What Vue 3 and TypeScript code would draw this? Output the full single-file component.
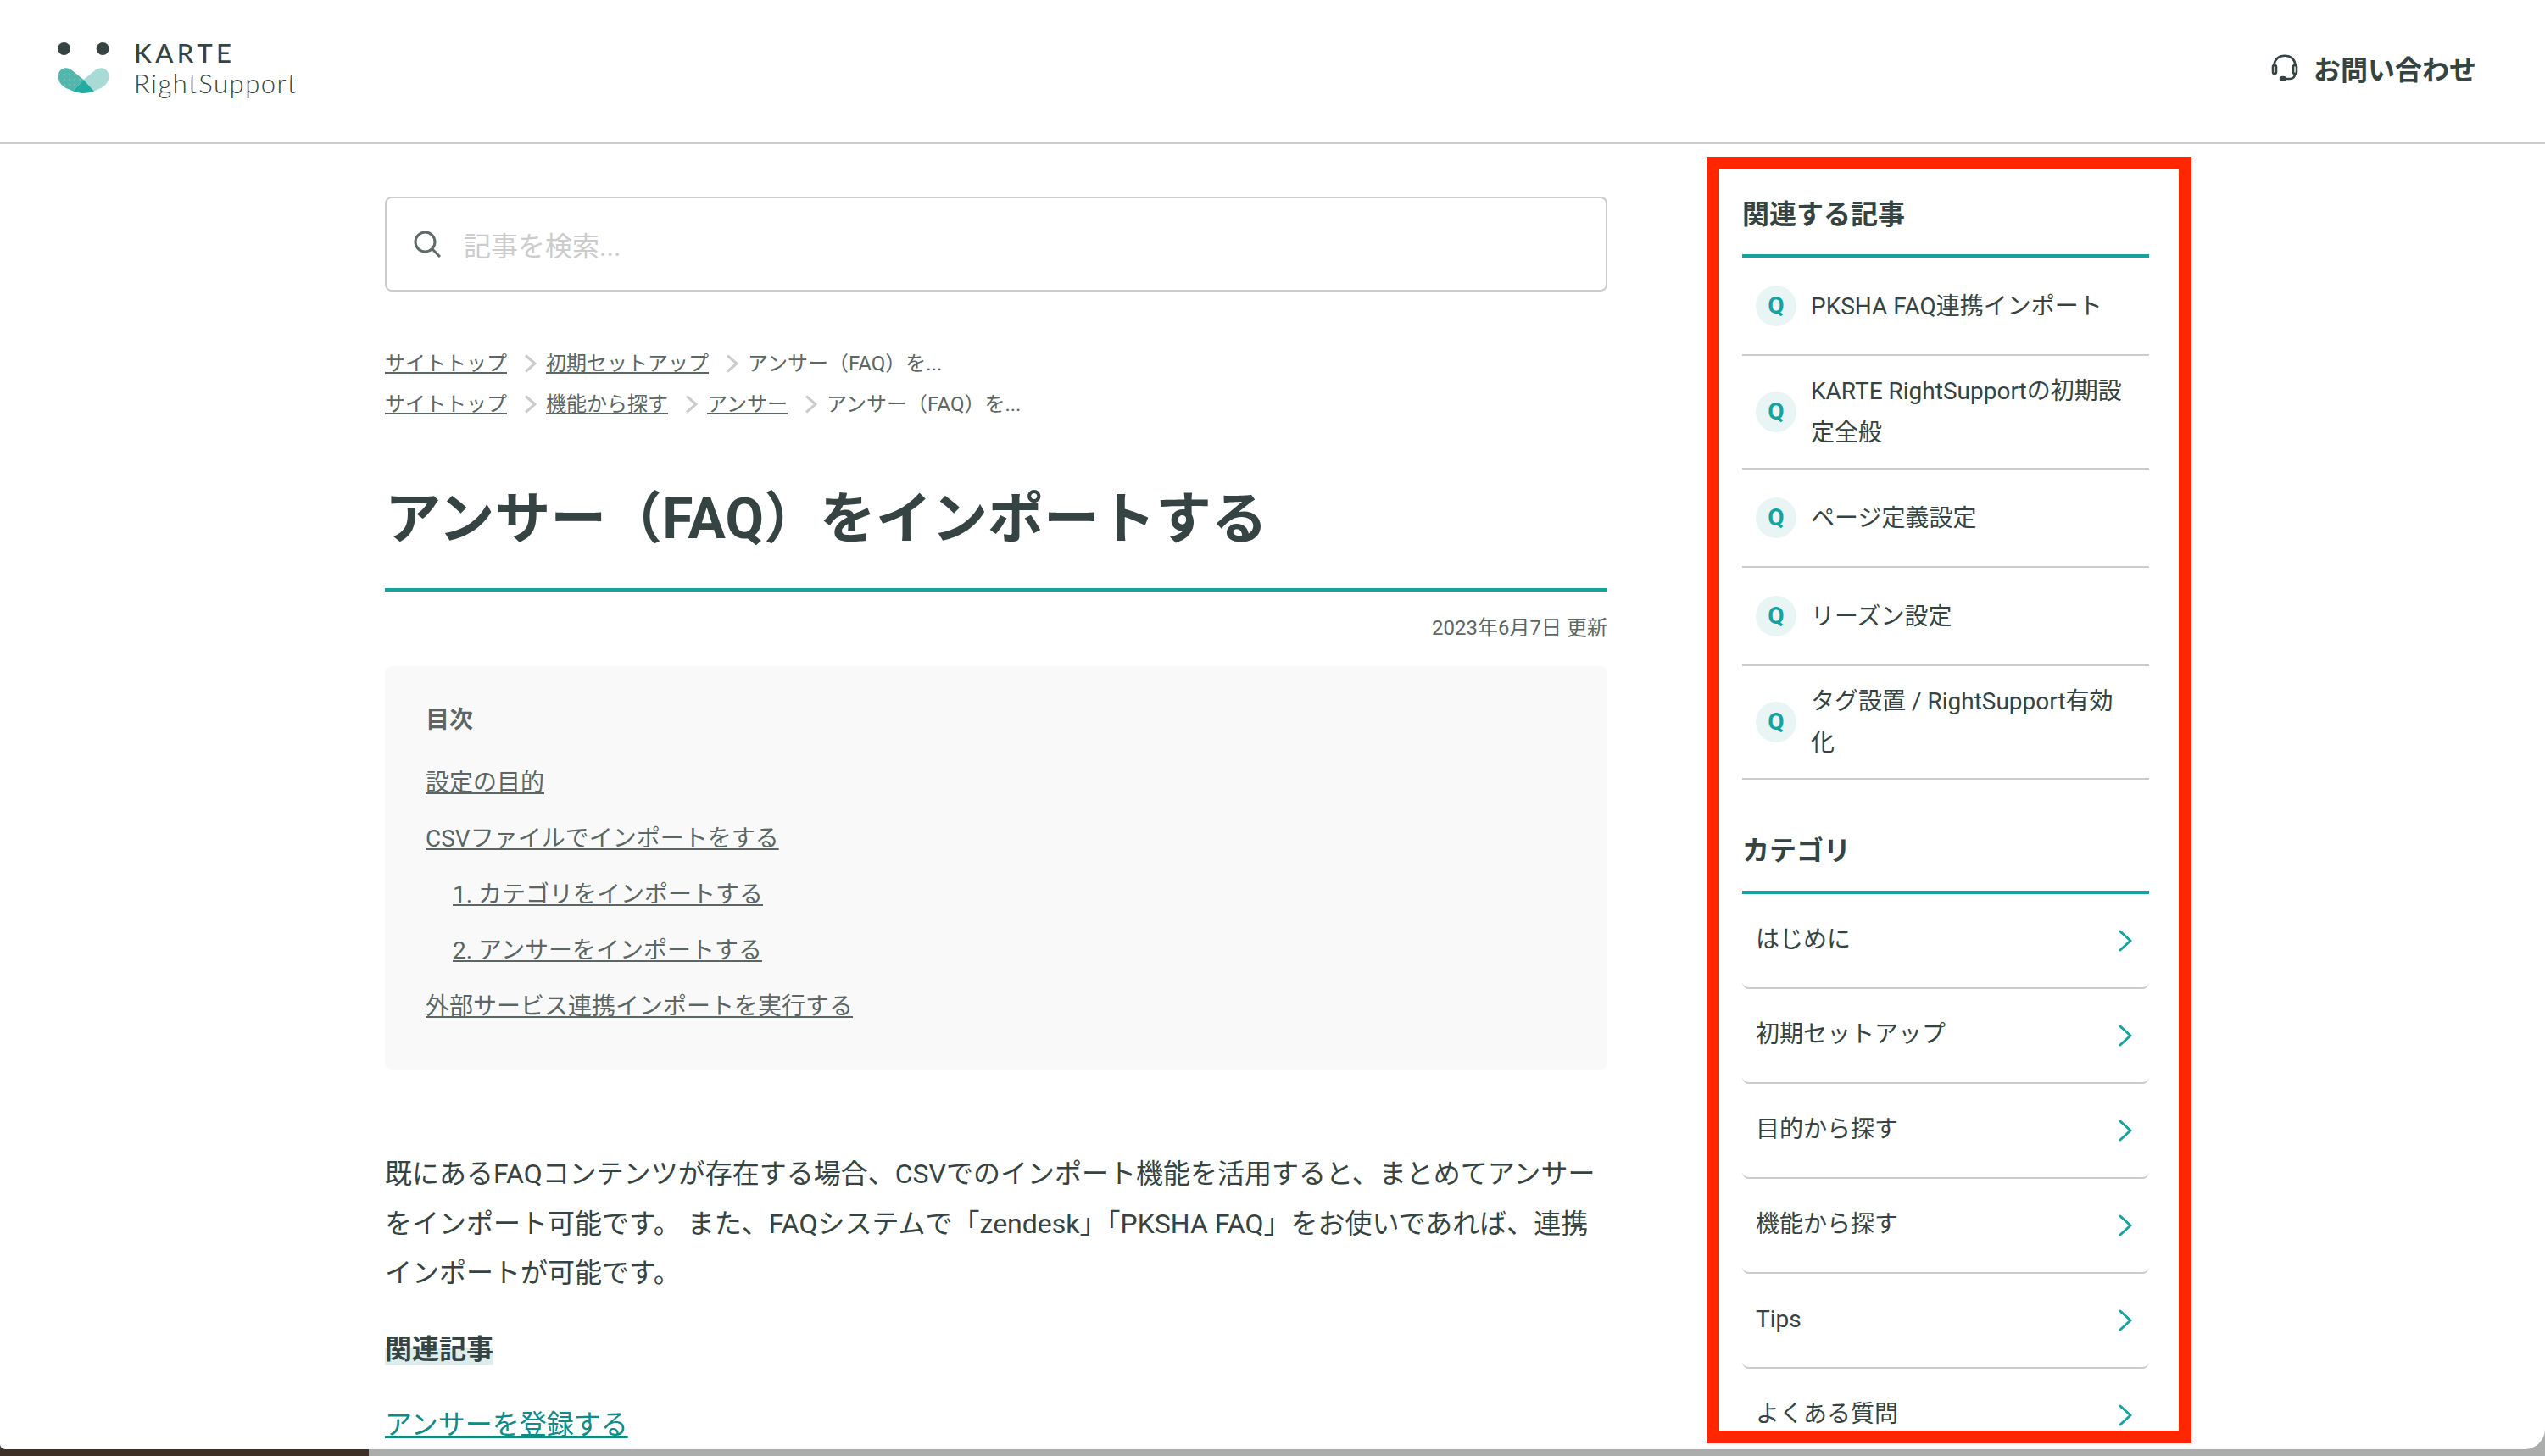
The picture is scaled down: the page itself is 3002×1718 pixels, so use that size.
<template>
  <div class="desktop">
    <div class="window">
      <header class="site-header">
        <a class="logo">
          <svg class="logo-mark" viewBox="0 0 61 60" width="61" height="60">
            <defs>
              <pattern id="dots" width="6" height="6" patternUnits="userSpaceOnUse">
                <circle cx="2" cy="2" r="0.8" fill="#fff" opacity="0.35" />
              </pattern>
            </defs>
            <circle cx="7.5" cy="7.5" r="7.5" fill="#354442" />
            <circle cx="53.2" cy="7.5" r="7.5" fill="#354442" />
            <path d="M30.5 44 17 33C11 28 3 30 1 37-1 44 3 50 10 54L18 57.5Z" fill="#52b6ac" />
            <path d="M30.5 44 17 33C11 28 3 30 1 37-1 44 3 50 10 54L18 57.5Z" fill="url(#dots)" />
            <path d="M30.5 44 44 33C50 28 58 30 60 37 62 44 58 50 51 54L43 57.5Z" fill="#a9dbd6" />
            <path d="M30.5 44 18 57.5C26 60.7 35 60.7 43 57.5Z" fill="#24aba0" />
          </svg>
          <span class="logo-text">
            <b>KARTE</b>
            <span>RightSupport</span>
          </span>
        </a>
        <a class="contact">
          <svg viewBox="0 0 32 32" width="32" height="32" fill="none" stroke="#354442" stroke-width="2.6" stroke-linecap="round">
            <path d="M3.5 13C4 6 9 1.8 16 1.8S28 6 28.500 13" />
            <rect x="2" y="13" width="4" height="10" rx="2" />
            <rect x="26" y="13" width="4" height="10" rx="2" />
            <path d="M28 23C28 27 26 29 22 29H15" />
            <ellipse cx="14" cy="29" rx="3" ry="2" fill="#354442" />
          </svg>
          <span>お問い合わせ</span>
        </a>
      </header>

      <div class="page">
        <main class="main">
          <div class="search">
            <svg viewBox="0 0 33 32" width="33" height="32" fill="none" stroke="#5f6968" stroke-width="3">
              <circle cx="13.500" cy="13.500" r="11.500" />
              <path d="M22 22 31 31" />
            </svg>
            <span>記事を検索...</span>
          </div>

          <nav class="crumbs">
            <div v-for="(trail, i) in trails" :key="i" class="trail">
              <template v-for="(c, j) in trail" :key="j">
                <a v-if="j < trail.length - 1">{{ c }}</a>
                <span v-else>{{ c }}</span>
                <svg v-if="j < trail.length - 1" viewBox="0 0 16 22" width="16" height="22" fill="none" stroke="#ccc" stroke-width="3">
                  <path d="M2 1.500 13 11 2 20.500" />
                </svg>
              </template>
            </div>
          </nav>

          <h1>アンサー（FAQ）をインポートする</h1>
          <p class="date">2023年6月7日 更新</p>

          <section class="toc">
            <h4>目次</h4>
            <a v-for="t in toc" :key="t.label" :class="{ sub: t.sub }">{{ t.label }}</a>
          </section>

          <p class="lead">
            既にあるFAQコンテンツが存在する場合、CSVでのインポート機能を活用すると、まとめてアンサーをインポート可能です。
            また、FAQシステムで「zendesk」「PKSHA FAQ」をお使いであれば、連携インポートが可能です。
          </p>
          <h3><span>関連記事</span></h3>
          <a class="link">アンサーを登録する</a>
        </main>

        <aside class="side">
          <div class="frame"></div>
          <h2>関連する記事</h2>
          <ul class="related">
            <li v-for="r in related" :key="r">
              <i>Q</i>
              <span>{{ r }}</span>
            </li>
          </ul>
          <h2 class="second">カテゴリ</h2>
          <ul class="cats">
            <li v-for="c in cats" :key="c">
              <span>{{ c }}</span>
              <svg viewBox="0 0 16 26" width="16" height="26" fill="none" stroke="#14a3a0" stroke-width="3" stroke-linecap="round" stroke-linejoin="round">
                <path d="M2 2 14 13 2 24" />
              </svg>
            </li>
          </ul>
        </aside>
      </div>
    </div>
  </div>
</template>

<script setup lang="ts">
const trails: string[][] = [
  ['サイトトップ', '初期セットアップ', 'アンサー（FAQ）を...'],
  ['サイトトップ', '機能から探す', 'アンサー', 'アンサー（FAQ）を...'],
]

const toc = [
  { label: '設定の目的', sub: false },
  { label: 'CSVファイルでインポートをする', sub: false },
  { label: '1. カテゴリをインポートする', sub: true },
  { label: '2. アンサーをインポートする', sub: true },
  { label: '外部サービス連携インポートを実行する', sub: false },
]

const related = [
  'PKSHA FAQ連携インポート',
  'KARTE RightSupportの初期設定全般',
  'ページ定義設定',
  'リーズン設定',
  'タグ設置 / RightSupport有効化',
]

const cats = ['はじめに', '初期セットアップ', '目的から探す', '機能から探す', 'Tips', 'よくある質問']
</script>

<style>
html,
body {
  margin: 0;
  background: #aaadac;
}
</style>

<style scoped>
.desktop {
  position: relative;
  height: 1718px;
  overflow: hidden;
  background: linear-gradient(90deg, #3c3027 435px, #aaadac 435px);
  font-family: Roboto, 'Noto Sans CJK JP', sans-serif;
  color: #354442;
}

.window {
  height: 1710px;
  overflow: hidden;
  border-radius: 0 0 24px 6px;
  background: #fff;
}

.site-header {
  display: flex;
  align-items: center;
  justify-content: space-between;
  box-sizing: border-box;
  height: 170px;
  padding: 0 81px 8px 68px;
  border-bottom: 2px solid #ccc;
}

.logo {
  display: flex;
  align-items: center;
  gap: 29px;
}

.logo-text {
  display: flex;
  flex-direction: column;
  font-family: Lato, sans-serif;
  line-height: 36px;
}

.logo-text b {
  font-size: 31px;
  font-weight: 500;
  letter-spacing: 4.500px;
}

.logo-text span {
  font-size: 31px;
  font-weight: 300;
  letter-spacing: 1.500px;
}

.contact {
  display: flex;
  align-items: center;
  gap: 18px;
  font-size: 32px;
  font-weight: 700;
}

.page {
  display: flex;
  gap: 159px;
  padding-left: 454px;
}

.main {
  width: 1442px;
  padding-top: 62px;
}

.search {
  display: flex;
  align-items: center;
  gap: 26px;
  box-sizing: border-box;
  height: 112px;
  padding-left: 32px;
  border: 2px solid #ccc;
  border-radius: 8px;
  font-size: 32px;
  color: #ccc;
}

.crumbs {
  margin-top: 61px;
  font-size: 24px;
  line-height: 48px;
  color: #5b6665;
}

.trail {
  display: flex;
  align-items: center;
  gap: 10px;
}

.trail svg {
  margin: 0 0 0 10px;
}

.trail a,
.toc a {
  text-decoration: underline;
}

h1 {
  margin: 62px 0 0;
  padding-bottom: 31px;
  border-bottom: 4px solid #14a3a0;
  font-size: 66px;
  font-weight: 700;
  line-height: 100px;
}

.date {
  margin: 23px 0 0;
  font-size: 24px;
  line-height: 40px;
  text-align: right;
  color: #5b6665;
}

.toc {
  display: flex;
  flex-direction: column;
  gap: 16px;
  margin-top: 25px;
  padding: 39px 48px 49px;
  border-radius: 8px;
  background: #f9f9f9;
  color: #5b6665;
  font-size: 28px;
  line-height: 50px;
}

.toc h4 {
  margin: 0 0 8px;
  font-size: 28px;
  font-weight: 700;
}

.toc .sub {
  padding-left: 32px;
}

.lead {
  margin: 94px 0 0;
  font-size: 32px;
  line-height: 58.500px;
}

h3 {
  margin: 32px 0 0;
  font-size: 32px;
  font-weight: 700;
  line-height: 56px;
}

h3 span {
  background: linear-gradient(transparent 45%, #deecec 45%);
}

.link {
  display: block;
  margin-top: 33px;
  font-size: 32px;
  line-height: 56px;
  color: #0f8b87;
  text-decoration: underline;
}

.side {
  position: relative;
  width: 480px;
  padding-top: 59px;
}

/* annotation drawn over the sidebar */
.frame {
  position: absolute;
  top: 15px;
  left: -42px;
  width: 572px;
  height: 1518px;
  box-sizing: border-box;
  border: solid #ff2600;
  border-width: 15px 15px 15px 15px;
  z-index: 2;
}

h2 {
  margin: 0;
  padding-bottom: 23px;
  border-bottom: 4px solid #14a3a0;
  font-size: 32px;
  font-weight: 700;
  line-height: 48px;
}

h2.second {
  margin-top: 60px;
}

ul {
  margin: 0;
  padding: 0;
  list-style: none;
  font-size: 28px;
  line-height: 49px;
}

.related li {
  display: flex;
  align-items: center;
  gap: 17px;
  box-sizing: border-box;
  min-height: 116px;
  padding: 17px 16px;
  border-bottom: 2px solid #ccc;
}

.related i {
  flex: none;
  width: 48px;
  height: 48px;
  border-radius: 50%;
  background: #e8f5f4;
  color: #14a3a0;
  font-size: 28px;
  font-style: normal;
  font-weight: 700;
  line-height: 48px;
  text-align: center;
}

.cats li {
  display: flex;
  align-items: center;
  justify-content: space-between;
  box-sizing: border-box;
  height: 112px;
  padding: 0 20px 0 16px;
  border-bottom: 2px solid #ccc;
  border-radius: 8px;
}

.cats span {
  margin-top: -4px;
}
</style>
